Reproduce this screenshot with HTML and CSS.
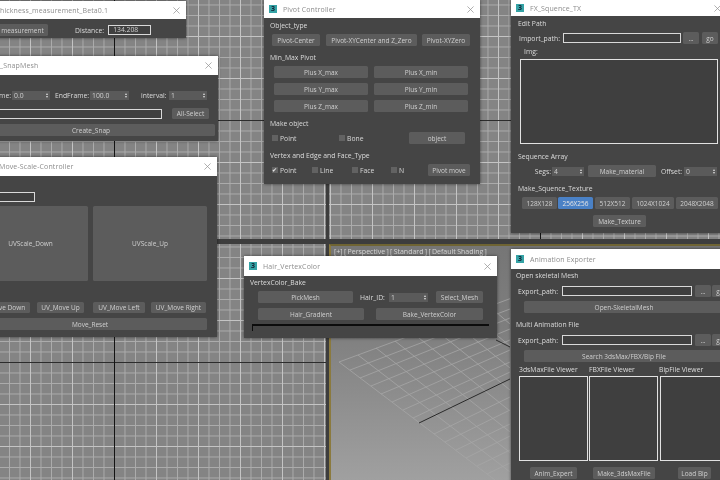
FILE: index.html
```html
<!DOCTYPE html>
<html lang="en">
<head>
<meta charset="utf-8">
<title>3ds Max tools</title>
<link rel="stylesheet" href="styles.css">
</head>
<body>
<svg class="sprite" width="0" height="0" aria-hidden="true"><symbol id="x" viewBox="0 0 8 8"><path d="M.5.5L7.500 7.500M7.500.5L.5 7.500"/></symbol></svg>
<div class="desktop">
  <div class="viewports">
    <div class="vp vp-tl"></div>
    <div class="vp vp-tr"></div>
    <div class="vp vp-bl"></div>
    <div class="vp vp-persp">
      <div class="vp-label">[+] [ Perspective ] [ Standard ] [ Default Shading ]</div>
      <svg class="persp-grid" viewBox="330 244 390 236" width="390" height="236">
        <path class="grid-lines" d="M340 362L511 298.7M351 370L511 309M361 378L511 318M372 386L511 329M382 394L511 340M393 402L511 350M404 410L511 362M414 418L511 372M435 434L511 397M446 442L511 410M457 450L511 424M467 458L511 436M478 466L511 450M488 474L511 463M340 362L496 480M359 355L511 472M377 348L511 452.500M396 341L511 432M415 334L511 411M433 327L511 390M452 320L511 368M471 313L511 346M490 306L511 324"/>
        <path class="axis-lines" d="M420 423L511 379M497 340L511 347"/>
      </svg>
    </div>
  </div>

  <section class="win win-thick">
    <header class="title"><span class="logo">3</span><span class="t-thick">Thickness_measurement_Beta0.1</span><svg class="close"><use href="#x"/></svg></header>
    <div class="body row-thick">
      <div class="btn w51 h12">measurement</div>
      <div class="txt ml27">Distance:</div>
      <div class="input w43 ml4">134.208</div>
    </div>
  </section>

  <section class="win win-snap">
    <header class="title"><span class="logo">3</span><span class="t-snap">_SnapMesh</span><svg class="close"><use href="#x"/></svg></header>
    <div class="body pad7">
      <div class="row mt16">
        <div class="txt w44 right">StartFrame:</div>
        <div class="spin w38 ml1">0.0<i></i></div>
        <div class="txt w32 ml5">EndFrame:</div>
        <div class="spin w39 ml3">100.0<i></i></div>
        <div class="txt w26 ml12">interval:</div>
        <div class="spin w38 ml2">1<i></i></div>
      </div>
      <div class="row mt8">
        <div class="input w195"></div>
        <div class="btn w37 h11 ml10">All-Select</div>
      </div>
      <div class="btn w248 h12 mt5">Create_Snap</div>
    </div>
  </section>

  <section class="win win-move">
    <header class="title"><span class="logo">3</span><span class="t-move">Move-Scale-Controller</span><svg class="close"><use href="#x"/></svg></header>
    <div class="body pad5">
      <div class="input w62 mt16"></div>
      <div class="row mt4">
        <div class="btn w115 h75">UVScale_Down</div>
        <div class="btn w114 h75 ml5">UVScale_Up</div>
      </div>
      <div class="row mt21">
        <div class="btn w57 h11">UV_Move Down</div>
        <div class="btn w47 h11 ml7">UV_Move Up</div>
        <div class="btn w52 h11 ml9">UV_Move Left</div>
        <div class="btn w55 h11 ml6">UV_Move Right</div>
      </div>
      <div class="btn w234 h12 mt5">Move_Reset</div>
    </div>
  </section>

  <section class="win win-pivot">
    <header class="title"><span class="logo">3</span><span class="t-name">Pivot Controller</span><svg class="close"><use href="#x"/></svg></header>
    <div class="body pad6">
      <div class="lbl mt3">Object_type</div>
      <div class="row mt3 ml2">
        <div class="btn w48 h12">Pivot-Center</div>
        <div class="btn w91 h12 ml6">Pivot-XYCenter and Z_Zero</div>
        <div class="btn w48 h12 ml5">Pivot-XYZero</div>
      </div>
      <div class="lbl mt7">Min_Max Pivot</div>
      <div class="pivot-grid mt3 ml4">
        <div class="btn h12">Plus X_max</div>
        <div class="btn h12">Plus X_min</div>
        <div class="btn h12">Plus Y_max</div>
        <div class="btn h12">Plus Y_min</div>
        <div class="btn h12">Plus Z_max</div>
        <div class="btn h12">Plus Z_min</div>
      </div>
      <div class="lbl mt7">Make object</div>
      <div class="row mt3 ml2">
        <div class="check w67"><i></i>Point</div>
        <div class="check w70"><i></i>Bone</div>
        <div class="btn w56 h12">object</div>
      </div>
      <div class="lbl mt7">Vertex and Edge and Face_Type</div>
      <div class="row mt3 ml2">
        <div class="check w40"><i class="on">✔</i>Point</div>
        <div class="check w40"><i></i>Line</div>
        <div class="check w39"><i></i>Face</div>
        <div class="check w37"><i></i>N</div>
        <div class="btn w42 h12">Pivot move</div>
      </div>
    </div>
  </section>

  <section class="win win-fx">
    <header class="title"><span class="logo">3</span><span class="t-name">FX_Squence_TX</span><svg class="close"><use href="#x"/></svg></header>
    <div class="body pad7">
      <div class="lbl mt3">Edit Path</div>
      <div class="row mt3">
        <div class="txt w44 ml1">Import_path:</div>
        <div class="input w118"></div>
        <div class="btn w16 h12 ml2">...</div>
        <div class="btn w16 h12 ml3">go</div>
      </div>
      <div class="lbl mt3 ml6">Img:</div>
      <div class="box w198 h85 mt2 ml2"></div>
      <div class="lbl mt8">Sequence Array</div>
      <div class="row mt3">
        <div class="txt w33 right">Segs:</div>
        <div class="spin w32 ml1">4<i></i></div>
        <div class="btn w68 h12 ml4">Make_material</div>
        <div class="txt w23 ml5">Offset:</div>
        <div class="spin w33">0<i></i></div>
      </div>
      <div class="lbl mt7">Make_Squence_Texture</div>
      <div class="row mt3 ml4">
        <div class="btn w35 h12">128X128</div>
        <div class="btn btn-on w35 h12 ml1">256X256</div>
        <div class="btn w35 h12 ml2">512X512</div>
        <div class="btn w42 h12 ml2">1024X1024</div>
        <div class="btn w42 h12 ml2">2048X2048</div>
      </div>
      <div class="btn w53 h12 mt6 ml75">Make_Texture</div>
    </div>
  </section>

  <section class="win win-hair">
    <header class="title"><span class="logo">3</span><span class="t-name">Hair_VertexColor</span><svg class="close"><use href="#x"/></svg></header>
    <div class="body pad6">
      <div class="lbl mt2">VertexColor_Bake</div>
      <div class="row mt3 ml8">
        <div class="btn w95 h12">PickMesh</div>
        <div class="txt w28 ml7">Hair_ID:</div>
        <div class="spin w39 ml1">1<i></i></div>
        <div class="btn w47 h12 ml8">Select_Mesh</div>
      </div>
      <div class="row mt5 ml8">
        <div class="btn w106 h12">Hair_Gradient</div>
        <div class="btn w107 h12 ml12">Bake_VertexColor</div>
      </div>
      <div class="progress mt4 ml2"></div>
    </div>
  </section>

  <section class="win win-anim">
    <header class="title"><span class="logo">3</span><span class="t-name">Animation Exporter</span></header>
    <div class="body pad5">
      <div class="lbl mt2">Open skeletal Mesh</div>
      <div class="row mt4 ml2">
        <div class="txt w44">Export_path:</div>
        <div class="input w130"></div>
        <div class="btn w16 h12 ml3">...</div>
        <div class="btn w16 h12 ml1">go</div>
      </div>
      <div class="btn w200 h12 mt4 ml8">Open-SkeletalMesh</div>
      <div class="lbl mt7">Multi Animation File</div>
      <div class="row mt4 ml2">
        <div class="txt w44">Export_path:</div>
        <div class="input w130"></div>
        <div class="btn w16 h12 ml3">...</div>
        <div class="btn w16 h12 ml1">go</div>
      </div>
      <div class="btn w200 h12 mt4 ml8">Search 3dsMax/FBX/Bip File</div>
      <div class="row mt3 ml3">
        <div class="lbl w70">3dsMaxFile Viewer</div>
        <div class="lbl w70">FBXFile Viewer</div>
        <div class="lbl w70">BipFile Viewer</div>
      </div>
      <div class="row mt1 ml3">
        <div class="box w69 h85"></div>
        <div class="box w69 h85 ml1"></div>
        <div class="box w69 h85 ml2"></div>
      </div>
      <div class="row mt6">
        <div class="btn w47 h12 ml14">Anim_Expert</div>
        <div class="btn w62 h12 ml16">Make_3dsMaxFile</div>
        <div class="btn w33 h12 ml23">Load Bip</div>
      </div>
    </div>
  </section>
</div>
</body>
</html>
```
FILE: styles.css
```css
* { box-sizing: border-box; }
html, body { margin: 0; padding: 0; background: #444; }
.sprite { position: absolute; }
.desktop {
  position: relative; width: 720px; height: 480px; overflow: hidden;
  font-family: "Open Sans", "Liberation Sans", sans-serif; font-size: 6.800px; color: #d8d8d8;
  filter: blur(0.4px);
}
.viewports {
  display: grid; width: 720px; height: 480px; background: #3d3d3d;
  grid-template-columns: 326px 1fr; grid-template-rows: 239px 1fr; column-gap: 3px; row-gap: 5px;
}
.vp { position: relative; overflow: hidden; background-color: #848484; }
.vp-tl, .vp-tr, .vp-bl {
  background-image:
    linear-gradient(#141414, #141414), linear-gradient(#2c2c2c, #2c2c2c),
    linear-gradient(90deg, #c4c4c4 1px, transparent 1px), linear-gradient(#c4c4c4 1px, transparent 1px),
    linear-gradient(90deg, #acacac 1px, transparent 1px), linear-gradient(#acacac 1px, transparent 1px);
  background-repeat: no-repeat, no-repeat, repeat, repeat, repeat, repeat;
  background-size: 1px 100%, 100% 1px, 42px 42px, 42px 42px, 10.5px 10.5px, 10.5px 10.5px;
}
.vp-tl { background-position: 114px 0, 0 120px, 114px 120px, 114px 120px, 114px 120px, 114px 120px; }
.vp-tr { background-position: 211px 0, 0 120px, 211px 120px, 211px 120px, 211px 120px, 211px 120px; }
.vp-bl { background-position: 114px 0, 0 118px, 114px 118px, 114px 118px, 114px 118px, 114px 118px; }
.vp-persp {
  background: linear-gradient(#767676, #7e7e7e 35%, #a0a0a0);
  border-left: 2px solid #8b7a3e; border-top: 2px solid #6f6433;
}
.vp-label { position: absolute; left: 3px; top: 1px; font-size: 7px; color: #d4d4d4; white-space: nowrap; word-spacing: -0.5px; }
.persp-grid { position: absolute; left: -2px; top: -2px; }
.grid-lines { fill: none; stroke: #a6a6a6; stroke-width: 0.8; }
.axis-lines { fill: none; stroke: #2a2a2a; stroke-width: 1; }

.win { position: absolute; background: #454545; box-shadow: 0 0 3px rgba(0, 0, 0, .55); overflow: hidden; }
.win-thick { left: -25px; top: 1px; width: 211px; height: 37px; }
.win-snap { left: -40px; top: 56px; width: 258px; height: 85px; }
.win-move { left: -32px; top: 157px; width: 249px; height: 180px; }
.win-pivot { left: 264px; top: 0; width: 216px; height: 184px; }
.win-fx { left: 511px; top: 0; width: 216px; height: 233px; }
.win-hair { left: 244px; top: 256px; width: 253px; height: 82px; }
.win-anim { left: 511px; top: 249px; width: 240px; height: 240px; }

.title { position: relative; display: flex; align-items: center; height: 19px; background: #fff; color: #8d8d8d; padding-left: 5px; letter-spacing: .12px; font-size: 7px; white-space: nowrap; }
.win-pivot .title { height: 18px; }
.win-fx .title { height: 16px; }
.win-hair .title, .win-anim .title { height: 20px; }
.win-thick .title { height: 18px; }
.logo { display: block; width: 8px; height: 8px; background: #35a3a6; color: #123; font-size: 7px; line-height: 8px; font-weight: 700; text-align: center; flex: none; letter-spacing: 0; }
.t-name { margin-left: 6px; }
.t-thick { margin-left: 8px; }
.t-snap { margin-left: 27px; }
.t-move { margin-left: 18px; }
.close { position: absolute; right: 6px; top: 50%; width: 7px; height: 7px; margin-top: -3.5px; fill: none; stroke: #8f8f8f; stroke-width: .8; }

.pad5 { padding-left: 5px; }
.pad6 { padding-left: 6px; }
.pad7 { padding-left: 7px; }
.row { display: flex; align-items: center; }
.row-thick { display: flex; align-items: center; padding: 5px 0 0 22px; }
.lbl { height: 10px; line-height: 10px; white-space: nowrap; color: #dcdcdc; }
.txt { white-space: nowrap; color: #dcdcdc; flex: none; }
.right { text-align: right; }
.btn { display: flex; align-items: center; justify-content: center; background: #5c5c5c; border-radius: 1.5px; color: #cfcfcf; white-space: nowrap; flex: none; font-size: 6.500px; }
.btn-on { background: #4a81c6; color: #e4e4e4; }
.input { height: 10px; line-height: 8px; padding-left: 4px; background: #3f3f3f; border: 1px solid #d9d9d9; color: #cfcfcf; flex: none; }
.box { border: 1px solid #e2e2e2; background: #3f3f3f; flex: none; }
.spin { display: flex; align-items: center; justify-content: space-between; height: 9px; padding: 0 2px 0 2px; background: #5a5a5a; color: #cfcfcf; flex: none; }
.spin i { display: flex; flex-direction: column; gap: 1px; }
.spin i::before, .spin i::after { content: ""; display: block; border-left: 1.500px solid transparent; border-right: 1.500px solid transparent; }
.spin i::before { border-bottom: 2px solid #ddd; }
.spin i::after { border-top: 2px solid #ddd; }
.check { display: flex; align-items: center; gap: 2px; white-space: nowrap; flex: none; }
.check i { display: block; width: 6px; height: 6px; background: #626262; font-style: normal; font-size: 6px; line-height: 6px; color: #eee; }
.pivot-grid { display: grid; grid-template-columns: 94px 94px; column-gap: 6px; row-gap: 5px; }
.progress { width: 237px; height: 7px; border-top: 2px solid #0c0c0c; border-left: 1px solid #0c0c0c; }

.w16 { width: 16px; } .w23 { width: 23px; } .w26 { width: 26px; } .w28 { width: 28px; }
.w32 { width: 32px; } .w33 { width: 33px; } .w35 { width: 35px; } .w37 { width: 37px; }
.w38 { width: 38px; } .w39 { width: 39px; } .w40 { width: 40px; } .w42 { width: 42px; }
.w43 { width: 43px; } .w44 { width: 44px; } .w47 { width: 47px; } .w48 { width: 48px; }
.w51 { width: 51px; } .w52 { width: 52px; } .w53 { width: 53px; } .w55 { width: 55px; }
.w56 { width: 56px; } .w57 { width: 57px; } .w62 { width: 62px; } .w67 { width: 67px; }
.w68 { width: 68px; } .w69 { width: 69px; } .w70 { width: 70px; } .w91 { width: 91px; }
.w95 { width: 95px; } .w106 { width: 106px; } .w107 { width: 107px; } .w114 { width: 114px; }
.w115 { width: 115px; } .w118 { width: 118px; } .w130 { width: 130px; } .w195 { width: 195px; }
.w198 { width: 198px; } .w200 { width: 200px; } .w234 { width: 234px; } .w248 { width: 248px; }
.h11 { height: 11px; } .h12 { height: 12px; } .h75 { height: 75px; } .h85 { height: 85px; }
.mt1 { margin-top: 1px; } .mt2 { margin-top: 2px; } .mt3 { margin-top: 3px; } .mt4 { margin-top: 4px; }
.mt5 { margin-top: 5px; } .mt6 { margin-top: 6px; } .mt7 { margin-top: 7px; } .mt8 { margin-top: 8px; }
.mt16 { margin-top: 16px; } .mt21 { margin-top: 21px; }
.ml1 { margin-left: 1px; } .ml2 { margin-left: 2px; } .ml3 { margin-left: 3px; } .ml4 { margin-left: 4px; }
.ml5 { margin-left: 5px; } .ml6 { margin-left: 6px; } .ml7 { margin-left: 7px; } .ml8 { margin-left: 8px; }
.ml9 { margin-left: 9px; } .ml10 { margin-left: 10px; } .ml12 { margin-left: 12px; } .ml14 { margin-left: 14px; }
.ml16 { margin-left: 16px; } .ml23 { margin-left: 23px; } .ml27 { margin-left: 27px; } .ml75 { margin-left: 75px; }
```
